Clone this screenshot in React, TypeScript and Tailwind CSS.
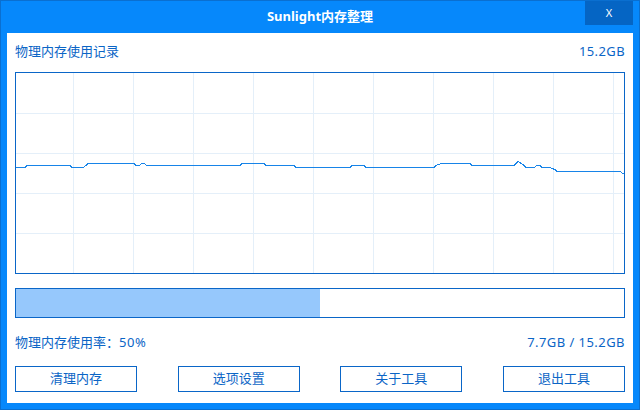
import React from 'react';

// memory history samples: [x, y] inside the 608x200 plot area
const history: [number, number][] = [
  [0, 94], [9, 94], [11, 92], [54, 92], [56, 94], [67, 94], [70, 92], [72, 90],
  [118, 90], [120, 92], [123, 92], [126, 90], [128, 90], [131, 92], [224, 92],
  [226, 90], [248, 90], [250, 92], [278, 92], [280, 94], [334, 94], [336, 92],
  [348, 92], [350, 94], [418, 94], [420, 92], [422, 91], [426, 90], [454, 90],
  [456, 92], [498, 92], [502, 88], [507, 91], [510, 94], [518, 94], [521, 92],
  [524, 92], [526, 94], [534, 94], [536, 95], [539, 96], [541, 98], [604, 98],
  [607, 100], [608, 100],
];

const vLines = [57, 117, 177, 237, 297, 357, 417, 477, 537, 597];
const hLines = [40, 80, 120, 160];

function HistoryChart() {
  return (
    <div className="h-[202px] border border-[#0a66c8] bg-white">
      <svg width="608" height="200" className="block">
        {vLines.map((x) => (
          <line key={'v' + x} x1={x + 0.5} y1={0} x2={x + 0.5} y2={200} stroke="#e4eff9" strokeWidth={1} />
        ))}
        {hLines.map((y) => (
          <line key={'h' + y} x1={0} y1={y + 0.5} x2={608} y2={y + 0.5} stroke="#e4eff9" strokeWidth={1} />
        ))}
        <polyline
          points={history.map(([x, y]) => `${x},${y + 0.5}`).join(' ')}
          fill="none"
          stroke="#1784e8"
          strokeWidth={1}
          shapeRendering="crispEdges"
        />
      </svg>
    </div>
  );
}

const buttons = ['清理内存', '选项设置', '关于工具', '退出工具'];

export default function App() {
  const usage = 50;

  return (
    <div
      className="w-[640px] h-[410px] border border-[#0a6fd0] bg-[#0688fb] flex flex-col text-[13px] text-[#0b65c6]"
      style={{ fontFamily: '"Noto Sans", "Noto Sans CJK SC", sans-serif' }}
    >
      {/* title bar */}
      <div className="relative h-[32px] flex items-center justify-center">
        <span className="text-white font-bold text-[13px]">Sunlight内存整理</span>
        <button className="absolute top-0 right-[6px] w-[48px] h-[24px] bg-[#0565c4] text-white text-[11px] flex items-center justify-center">
          X
        </button>
      </div>

      {/* body */}
      <div className="flex-1 mx-[6px] mb-[6px] bg-white px-[8px] pt-[8px] flex flex-col">
        <div className="h-[20px] flex items-center justify-between leading-[20px]">
          <span>物理内存使用记录</span>
          <span className="tracking-[0.4px]">15.2GB</span>
        </div>

        <div className="mt-[11px]">
          <HistoryChart />
        </div>

        <div className="mt-[14px] h-[30px] border border-[#0a66c8] bg-white">
          <div className="h-full bg-[#96c8fc]" style={{ width: `${usage}%` }} />
        </div>

        <div className="mt-[14px] h-[20px] flex items-center justify-between leading-[20px]">
          <span>
            物理内存使用率：<span className="tracking-[0.5px]">{usage}%</span>
          </span>
          <span className="tracking-[0.45px]">7.7GB / 15.2GB</span>
        </div>

        <div className="mt-[14px] flex justify-between">
          {buttons.map((label) => (
            <button
              key={label}
              className="w-[122px] h-[26px] border border-[#0a66c8] bg-white text-[13px] text-[#0b65c6] flex items-center justify-center"
            >
              {label}
            </button>
          ))}
        </div>
      </div>
    </div>
  );
}
